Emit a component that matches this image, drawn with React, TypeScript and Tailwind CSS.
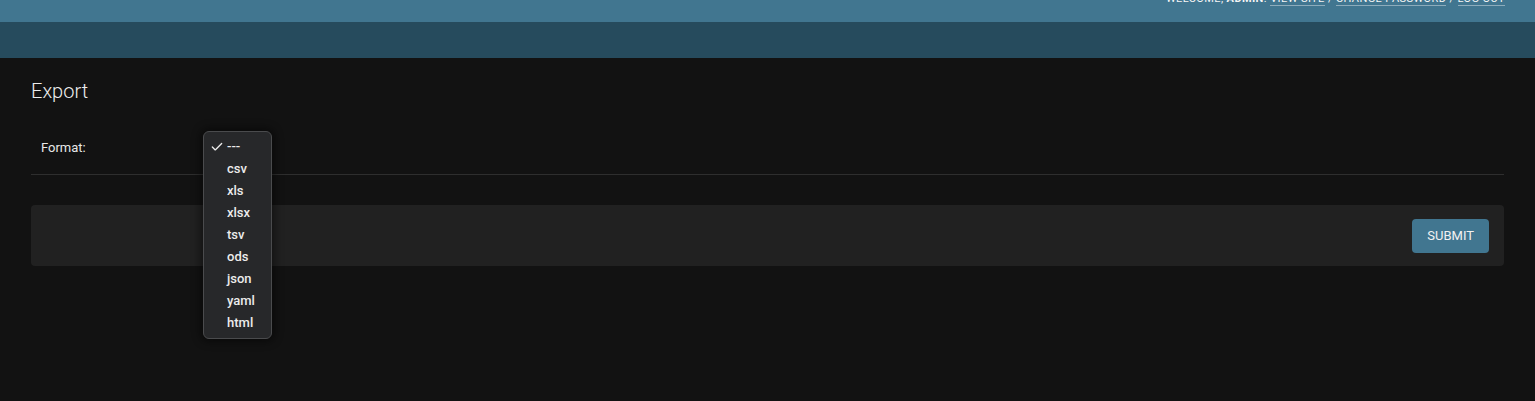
import { Check } from "lucide-react";

const formats = ["---", "csv", "xls", "xlsx", "tsv", "ods", "json", "yaml", "html"];

export default function App() {
  return (
    <div className="min-h-[401px] bg-[#121212] font-['Roboto','Liberation_Sans',sans-serif] text-[#e6e6e6]">
      {/* header, partly scrolled out of view */}
      <div className="h-[22px] overflow-hidden bg-[#417690]">
        <div className="mt-[-8px] flex justify-end pr-[30px] text-[11px] uppercase leading-[13px] tracking-[0.4px] text-[#f5f5f5]">
          <span>
            Welcome, <strong className="font-bold">admin</strong>.{" "}
            <a className="border-b border-white/40">View site</a> /{" "}
            <a className="border-b border-white/40">Change password</a> /{" "}
            <a className="border-b border-white/40">Log out</a>
          </span>
        </div>
      </div>

      {/* breadcrumbs bar */}
      <div className="h-[36px] bg-[#264b5d]"></div>

      <div className="px-[31px] pt-[21px]">
        <h1 className="text-[20px] font-light leading-[24px] text-[#ededed]">Export</h1>

        <form className="mt-[19px]">
          <div className="flex items-center border-b border-[#2e2e2e] px-[10px] py-[10px]">
            <label className="w-[162px] text-[13px] text-[#e8e8e8]">Format:</label>
            <div className="relative h-[32px]">
              {/* open native select list */}
              <div className="absolute left-0 top-[-1px] z-10 w-[69px] rounded-[6px] border border-[#4a4b4d] bg-[#27282a] py-[4px] shadow-[0_0_8px_3px_rgba(0,0,0,0.45)]">
                {formats.map((f, i) => (
                  <div key={f} className="flex h-[22px] items-center text-[13px] font-medium text-[#ececec]">
                    <span className="flex w-[23px] justify-end pr-[3px]">
                      {i === 0 && <Check size={14} strokeWidth={2.25} />}
                    </span>
                    <span>{f}</span>
                  </div>
                ))}
              </div>
            </div>
          </div>

          <div className="mt-[30px] flex h-[61px] items-center justify-end rounded-[4px] bg-[#212121] px-[15px]">
            <button
              type="button"
              className="h-[34px] rounded-[4px] bg-[#417690] px-[15px] text-[13px] uppercase text-[#f2f2f2]"
            >
              Submit
            </button>
          </div>
        </form>
      </div>
    </div>
  );
}
